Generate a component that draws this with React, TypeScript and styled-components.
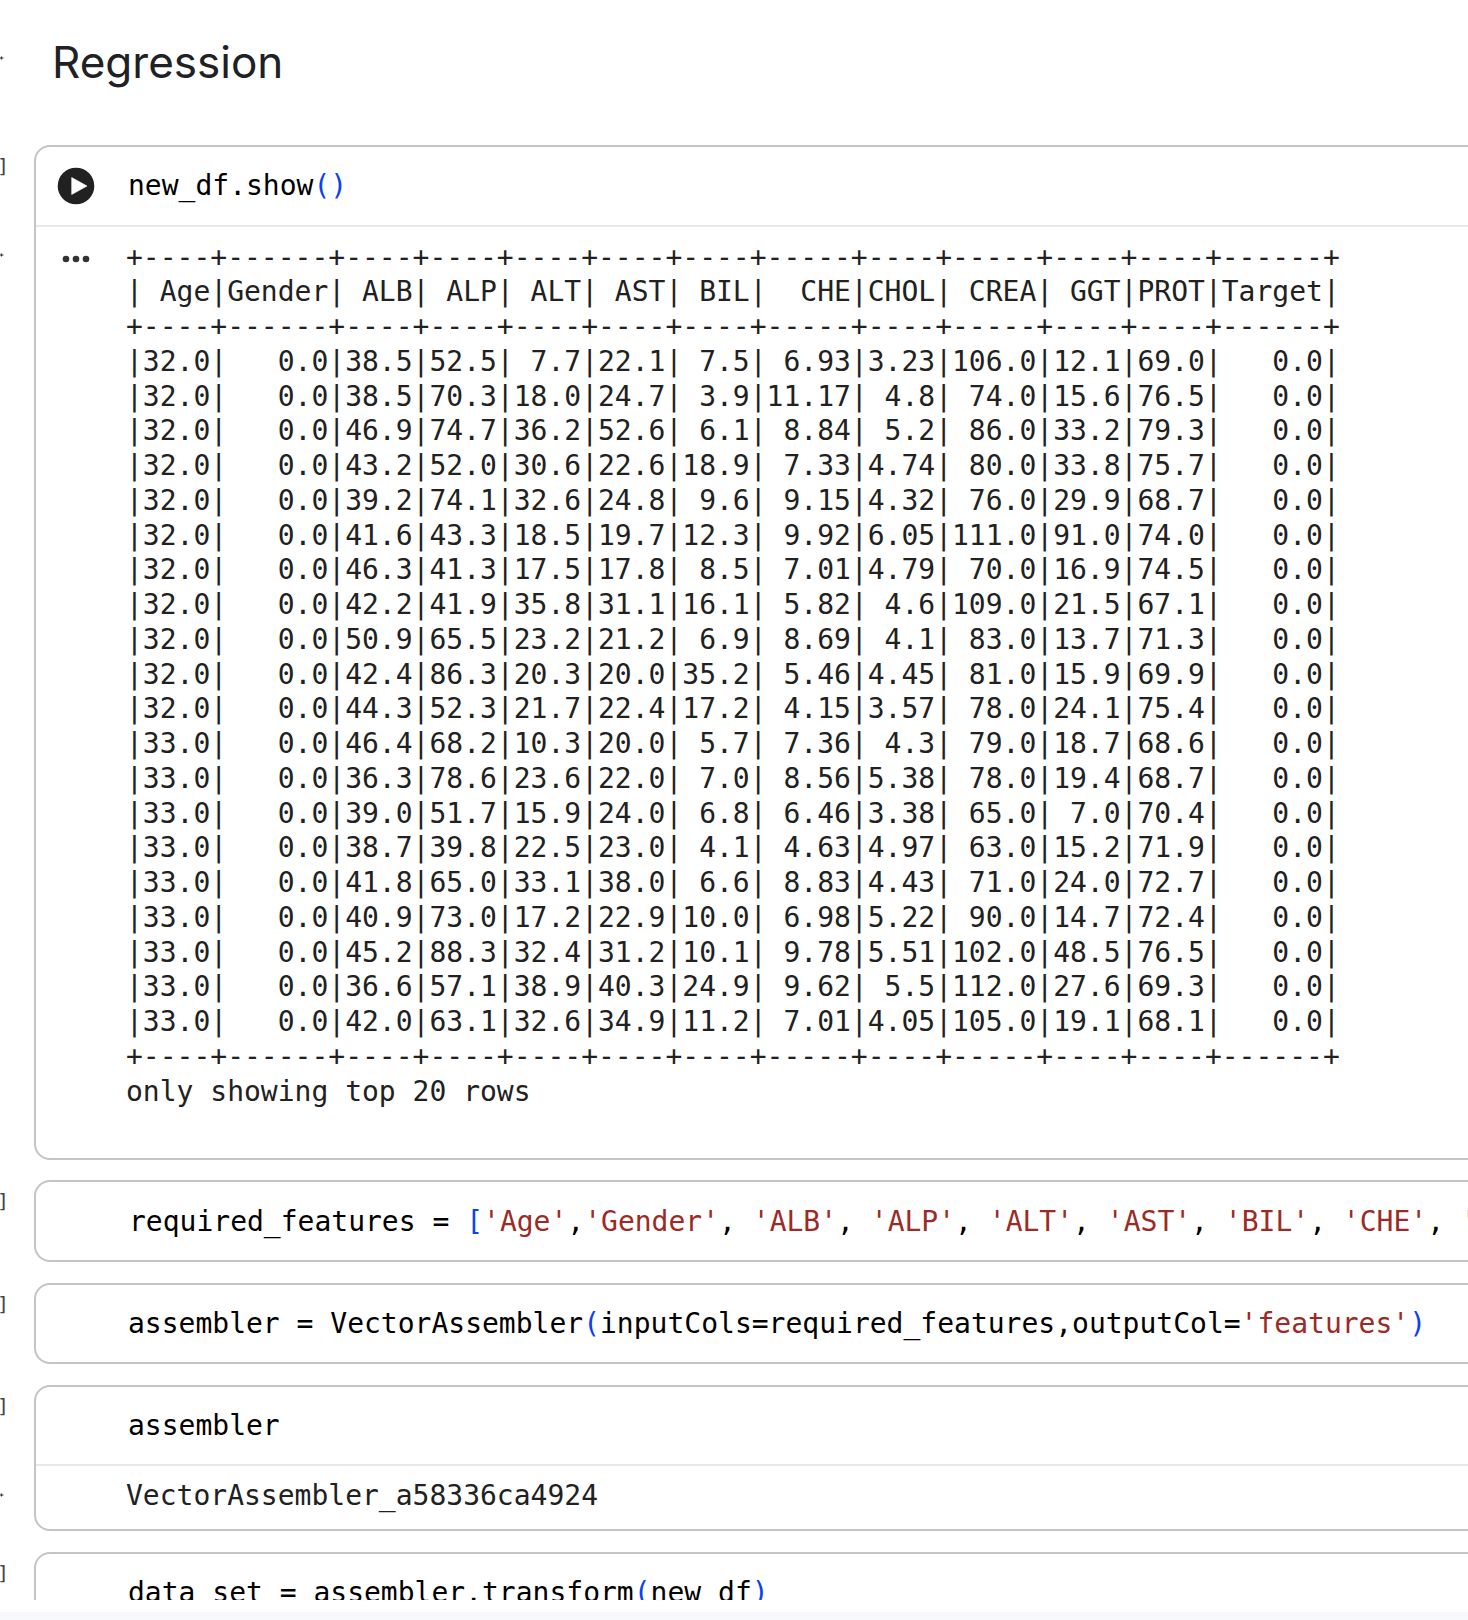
import React from "react";
import styled, { createGlobalStyle } from "styled-components";

const GlobalStyle = createGlobalStyle`
  html, body {
    margin: 0;
    padding: 0;
    background: #f8f9fd;
  }
`;

const Page = styled.div`
  width: 1468px;
  height: 1620px;
  overflow: hidden;
  background: #f8f9fd;
`;

const Sheet = styled.main`
  height: 1612px;
  background: #fff;
`;

const Scroller = styled.div`
  height: 1600px;
  overflow: hidden;
`;

const HeadRow = styled.header`
  height: 145px;
  display: flex;
  align-items: flex-start;
`;

const Heading = styled.h1`
  margin: 0;
  padding: 34px 0 0 48px;
  font-family: Inter, "Liberation Sans", sans-serif;
  font-size: 44px;
  font-weight: 400;
  line-height: 56px;
  color: #202124;
`;

const CellStack = styled.div`
  display: flex;
  flex-direction: column;
  gap: 20.75px;
`;

const Row = styled.section`
  display: grid;
  grid-template-columns: 34px 1fr;
`;

const Gutter = styled.div`
  display: flex;
  flex-direction: column;
`;

const Bracket = styled.span`
  height: 42px;
  margin-left: -3px;
  display: flex;
  align-items: center;
  font-family: "DejaVu Sans Mono", monospace;
  font-size: 20px;
  color: #444;
`;

const TickIcon = styled.svg<{ $top: number }>`
  display: block;
  flex: none;
  margin-top: ${(p) => p.$top}px;
`;

const Tick = ({ top }: { top: number }) => (
  <TickIcon $top={top} width="4" height="4" viewBox="0 0 4 4">
    <path d="M0 2H3.5M1.5 .5V3.5" stroke="#333" strokeWidth="1.2" fill="none" />
  </TickIcon>
);

const Cell = styled.div`
  margin-right: -30px;
  border: 2px solid #c4c4c4;
  border-radius: 16px;
  background: #fff;
`;

const Input = styled.div`
  height: 77.5px;
  display: flex;
  align-items: center;
  padding-left: 21px;
`;

const IconSlot = styled.div<{ $w?: number }>`
  width: ${(p) => p.$w ?? 71}px;
  flex: none;
  svg {
    display: block;
  }
`;

const Code = styled.code`
  font-family: "DejaVu Sans Mono", monospace;
  font-size: 28px;
  line-height: 35px;
  color: #000;
  white-space: pre;
`;

const Blue = styled.span`
  color: #0842f5;
`;

const Str = styled.span`
  color: #9c2a25;
`;

const Output = styled.div`
  display: flex;
  border-top: 2px solid #e8e8e8;
  padding: 14px 0 13.5px 21px;
`;

const DotsSlot = styled.div`
  width: 69px;
  flex: none;
  padding: 14px 0 0 5px;
  box-sizing: border-box;
  svg {
    display: block;
  }
`;

const Pre = styled.pre`
  margin: 0;
  font-family: "DejaVu Sans Mono", monospace;
  font-size: 28px;
  line-height: 34.75px;
  color: #212121;
`;

const ShortOutput = styled(Output)`
  padding: 13px 0 15px 21px;
`;

const PlayIcon = () => (
  <svg width="38" height="38" viewBox="0 0 38 38">
    <circle cx="19" cy="19" r="18.3" fill="#212121" />
    <path d="M14.7 10.5 L30 19 L14.7 27.5 Z" fill="#fff" stroke="#fff" strokeWidth="0.6" strokeLinejoin="round" />
  </svg>
);

const DotsIcon = () => (
  <svg width="28" height="8" viewBox="0 0 28 8">
    <circle cx="4" cy="4" r="3.3" fill="#333" />
    <circle cx="14" cy="4" r="3.3" fill="#333" />
    <circle cx="24" cy="4" r="3.3" fill="#333" />
  </svg>
);

const table = `+----+------+----+----+----+----+----+-----+----+-----+----+----+------+
| Age|Gender| ALB| ALP| ALT| AST| BIL|  CHE|CHOL| CREA| GGT|PROT|Target|
+----+------+----+----+----+----+----+-----+----+-----+----+----+------+
|32.0|   0.0|38.5|52.5| 7.7|22.1| 7.5| 6.93|3.23|106.0|12.1|69.0|   0.0|
|32.0|   0.0|38.5|70.3|18.0|24.7| 3.9|11.17| 4.8| 74.0|15.6|76.5|   0.0|
|32.0|   0.0|46.9|74.7|36.2|52.6| 6.1| 8.84| 5.2| 86.0|33.2|79.3|   0.0|
|32.0|   0.0|43.2|52.0|30.6|22.6|18.9| 7.33|4.74| 80.0|33.8|75.7|   0.0|
|32.0|   0.0|39.2|74.1|32.6|24.8| 9.6| 9.15|4.32| 76.0|29.9|68.7|   0.0|
|32.0|   0.0|41.6|43.3|18.5|19.7|12.3| 9.92|6.05|111.0|91.0|74.0|   0.0|
|32.0|   0.0|46.3|41.3|17.5|17.8| 8.5| 7.01|4.79| 70.0|16.9|74.5|   0.0|
|32.0|   0.0|42.2|41.9|35.8|31.1|16.1| 5.82| 4.6|109.0|21.5|67.1|   0.0|
|32.0|   0.0|50.9|65.5|23.2|21.2| 6.9| 8.69| 4.1| 83.0|13.7|71.3|   0.0|
|32.0|   0.0|42.4|86.3|20.3|20.0|35.2| 5.46|4.45| 81.0|15.9|69.9|   0.0|
|32.0|   0.0|44.3|52.3|21.7|22.4|17.2| 4.15|3.57| 78.0|24.1|75.4|   0.0|
|33.0|   0.0|46.4|68.2|10.3|20.0| 5.7| 7.36| 4.3| 79.0|18.7|68.6|   0.0|
|33.0|   0.0|36.3|78.6|23.6|22.0| 7.0| 8.56|5.38| 78.0|19.4|68.7|   0.0|
|33.0|   0.0|39.0|51.7|15.9|24.0| 6.8| 6.46|3.38| 65.0| 7.0|70.4|   0.0|
|33.0|   0.0|38.7|39.8|22.5|23.0| 4.1| 4.63|4.97| 63.0|15.2|71.9|   0.0|
|33.0|   0.0|41.8|65.0|33.1|38.0| 6.6| 8.83|4.43| 71.0|24.0|72.7|   0.0|
|33.0|   0.0|40.9|73.0|17.2|22.9|10.0| 6.98|5.22| 90.0|14.7|72.4|   0.0|
|33.0|   0.0|45.2|88.3|32.4|31.2|10.1| 9.78|5.51|102.0|48.5|76.5|   0.0|
|33.0|   0.0|36.6|57.1|38.9|40.3|24.9| 9.62| 5.5|112.0|27.6|69.3|   0.0|
|33.0|   0.0|42.0|63.1|32.6|34.9|11.2| 7.01|4.05|105.0|19.1|68.1|   0.0|
+----+------+----+----+----+----+----+-----+----+-----+----+----+------+
only showing top 20 rows

`;

const features = ["Age", "Gender", "ALB", "ALP", "ALT", "AST", "BIL", "CHE"];

export default function App() {
  return (
    <Page>
      <GlobalStyle />
      <Sheet>
        <Scroller>
          <HeadRow>
            <Tick top={56} />
            <Heading>Regression</Heading>
          </HeadRow>
          <CellStack>
            <Row>
              <Gutter>
                <Bracket>]</Bracket>
                <Tick top={66} />
              </Gutter>
              <Cell>
                <Input>
                  <IconSlot>
                    <PlayIcon />
                  </IconSlot>
                  <Code>
                    new_df.show<Blue>()</Blue>
                  </Code>
                </Input>
                <Output>
                  <DotsSlot>
                    <DotsIcon />
                  </DotsSlot>
                  <Pre>{table}</Pre>
                </Output>
              </Cell>
            </Row>
            <Row>
              <Gutter>
                <Bracket>]</Bracket>
              </Gutter>
              <Cell>
                <Input>
                  <IconSlot $w={72} />
                  <Code>
                    required_features = <Blue>[</Blue>
                    {features.map((f, i) => (
                      <React.Fragment key={f}>
                        <Str>'{f}'</Str>
                        {i === 0 ? "," : ", "}
                      </React.Fragment>
                    ))}
                    <Str>'</Str>
                  </Code>
                </Input>
              </Cell>
            </Row>
            <Row>
              <Gutter>
                <Bracket>]</Bracket>
              </Gutter>
              <Cell>
                <Input>
                  <IconSlot />
                  <Code>
                    assembler = VectorAssembler<Blue>(</Blue>inputCols=required_features,outputCol=
                    <Str>'features'</Str>
                    <Blue>)</Blue>
                  </Code>
                </Input>
              </Cell>
            </Row>
            <Row>
              <Gutter>
                <Bracket>]</Bracket>
                <Tick top={66} />
              </Gutter>
              <Cell>
                <Input>
                  <IconSlot />
                  <Code>assembler</Code>
                </Input>
                <ShortOutput>
                  <IconSlot $w={69} />
                  <Pre>VectorAssembler_a58336ca4924</Pre>
                </ShortOutput>
              </Cell>
            </Row>
            <Row>
              <Gutter>
                <Bracket>]</Bracket>
              </Gutter>
              <Cell>
                <Input>
                  <IconSlot />
                  <Code>
                    data_set = assembler.transform<Blue>(</Blue>new_df<Blue>)</Blue>
                  </Code>
                </Input>
              </Cell>
            </Row>
          </CellStack>
        </Scroller>
      </Sheet>
    </Page>
  );
}
